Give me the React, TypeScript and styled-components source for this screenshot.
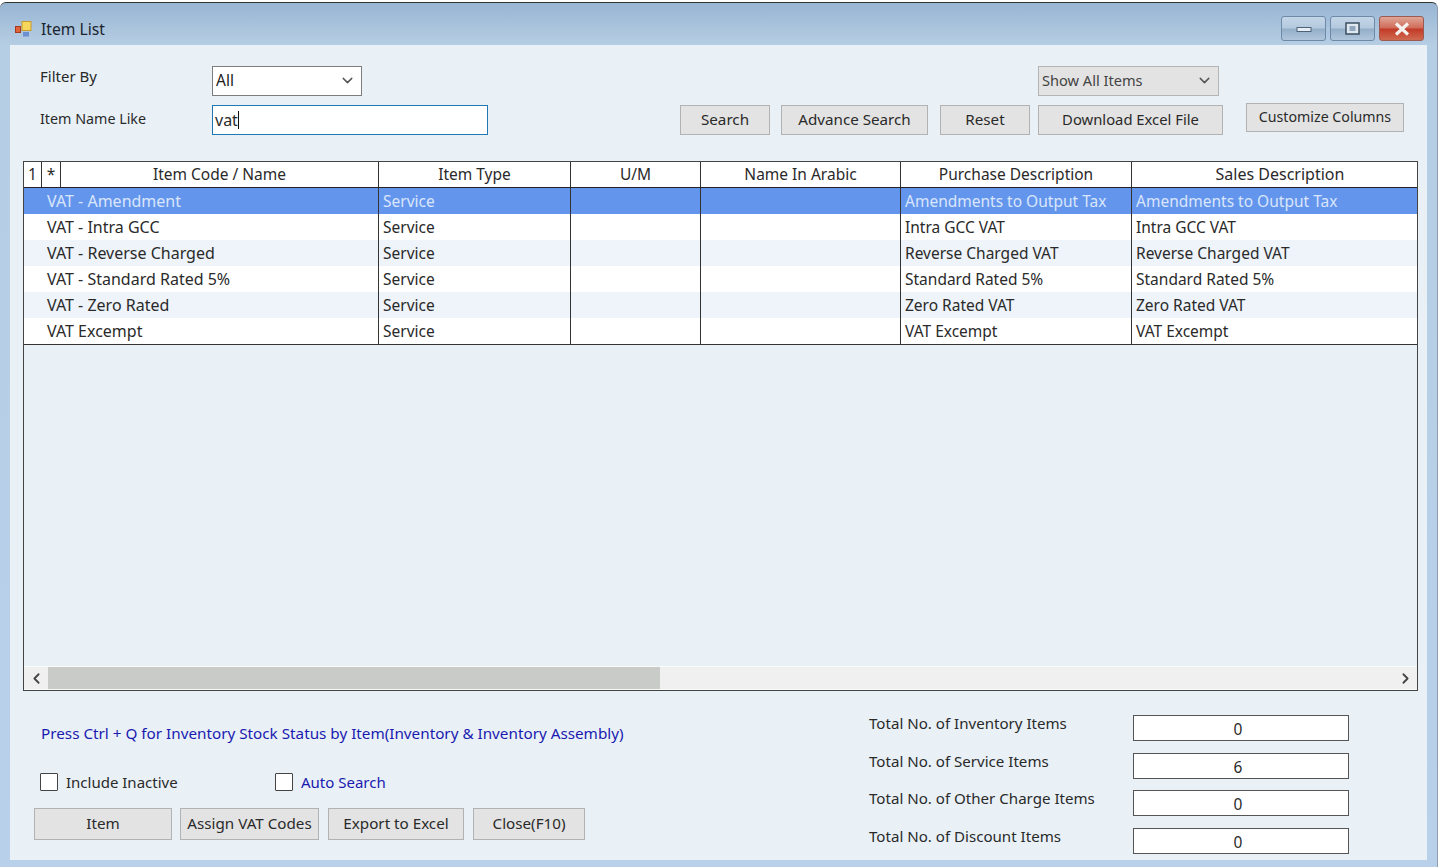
import React from 'react'
import styled, { createGlobalStyle } from 'styled-components'
import { ChevronDown, ChevronLeft, ChevronRight } from 'lucide-react'

const GlobalStyle = createGlobalStyle`
  html, body {
    margin: 0;
    padding: 0;
    background: #fff;
  }
  body {
    padding-top: 2px;
    font-family: "Noto Sans", "DejaVu Sans", sans-serif;
    font-size: 15px;
    color: #2a2a2a;
  }
`

const Window = styled.div`
  width: 1438px;
  height: 865px;
  box-sizing: border-box;
  padding: 0 10px 7px 10px;
  display: flex;
  flex-direction: column;
  border-top: 1px solid #333;
  border-right: 1px solid #8a9cae;
  border-radius: 6px 6px 0 0;
  overflow: hidden;
  background: linear-gradient(180deg, #98b5d2 0, #b6cee4 42px, #b8d0ea 100%);
`
const TitleBar = styled.div`
  height: 42px;
  flex: none;
  display: flex;
  align-items: center;
  padding: 10px 0 0 4px;
  box-sizing: border-box;
`
const TitleText = styled.span`
  margin-left: 7px;
  font-size: 15.7px;
  color: #1c2530;
`
const WindowButtons = styled.div`
  margin-left: auto;
  margin-right: 3px;
  margin-top: 3px;
  align-self: flex-start;
  display: flex;
  gap: 4px;
`
const WindowButton = styled.div<{ $close?: boolean }>`
  width: 45px;
  height: 25px;
  box-sizing: border-box;
  border: 1px solid ${(p) => (p.$close ? '#9c5a50' : '#6f8aa8')};
  border-radius: 3px;
  display: flex;
  align-items: center;
  justify-content: center;
  background: ${(p) =>
    p.$close
      ? 'linear-gradient(180deg, #e0a798 0, #d06a58 48%, #c23a28 52%, #cf6a50 100%)'
      : 'linear-gradient(180deg, #c4d6e8 0, #b4c9de 48%, #94aec8 52%, #b0c6dc 100%)'};
`
const Panel = styled.div`
  flex: 1;
  padding: 21px 0 0 13px;
  display: flex;
  flex-direction: column;
  min-height: 0;
  background: #e9f1f7;
`
const FormRow = styled.div<{ $top?: number }>`
  display: flex;
  align-items: flex-start;
  margin-top: ${(p) => p.$top ?? 0}px;
  height: 30px;
`
const FormLabel = styled.div<{ $shift: number; $size?: number }>`
  width: 172px;
  padding-left: 17px;
  margin-top: ${(p) => p.$shift}px;
  font-size: ${(p) => p.$size ?? 15}px;
  line-height: 20px;
  flex: none;
`
const Select = styled.div<{ $w: number; $grey?: boolean; $left?: number }>`
  width: ${(p) => p.$w}px;
  height: 30px;
  box-sizing: border-box;
  margin-left: ${(p) => p.$left ?? 0}px;
  padding: 0 5px 2px 3px;
  display: flex;
  align-items: center;
  justify-content: space-between;
  font-size: ${(p) => (p.$grey ? 14.6 : 15.5)}px;
  border: 1px solid ${(p) => (p.$grey ? '#b4b4b4' : '#7d7d7d')};
  background: ${(p) => (p.$grey ? '#e3e3e3' : '#fff')};
  color: ${(p) => (p.$grey ? '#444' : '#222')};
`
const SearchInput = styled.div`
  width: 276px;
  height: 30px;
  box-sizing: border-box;
  padding: 0 2px 1px;
  display: flex;
  align-items: center;
  font-size: 16px;
  background: #fff;
  border: 1.5px solid #1d78b4;
`
const Caret = styled.span`
  width: 1px;
  height: 18px;
  background: #111;
`
const FlatButton = styled.div<{ $w: number; $h?: number; $left?: number; $top?: number; $size?: number }>`
  width: ${(p) => p.$w}px;
  height: ${(p) => p.$h ?? 30}px;
  box-sizing: border-box;
  margin-left: ${(p) => p.$left ?? 0}px;
  margin-top: ${(p) => p.$top ?? 0}px;
  padding-bottom: 2px;
  flex: none;
  display: flex;
  align-items: center;
  justify-content: center;
  white-space: nowrap;
  font-size: ${(p) => p.$size ?? 15.2}px;
  color: #2a2a2a;
  background: #e3e3e3;
  border: 1px solid #b2b2b2;
`
const Grid = styled.div`
  margin-top: 26px;
  height: 530px;
  flex: none;
  box-sizing: border-box;
  width: 1395px;
  display: flex;
  flex-direction: column;
  border: 1px solid #444;
`
const GridRow = styled.div<{ $selected?: boolean; $alt?: boolean; $head?: boolean }>`
  display: grid;
  grid-template-columns: 18px 19px 318px 192px 130px 200px 231px 1fr;
  height: 26px;
  flex: none;
  box-sizing: border-box;
  background: ${(p) => (p.$selected ? '#6495ed' : p.$alt ? '#eef4f9' : '#fff')};
  color: ${(p) => (p.$selected ? '#d9e6fb' : '#2a2a2a')};
  border-bottom: ${(p) => (p.$head ? '1px solid #222' : 'none')};
`
const Cell = styled.div<{ $center?: boolean; $indent?: number; $span?: number; $size?: number; $head?: boolean }>`
  grid-column: span ${(p) => p.$span ?? 1};
  box-sizing: border-box;
  padding-left: ${(p) => p.$indent ?? 4}px;
  font-size: ${(p) => p.$size ?? 15.5}px;
  line-height: ${(p) => (p.$head ? 24 : 26)}px;
  white-space: nowrap;
  overflow: hidden;
  text-align: ${(p) => (p.$center ? 'center' : 'left')};
  border-right: 1px solid #333;
  &:last-child {
    border-right: none;
  }
`
const EmptyArea = styled.div`
  flex: 1;
  background: #e9f1f7;
  border-top: 1px solid #333;
`
const ScrollBar = styled.div`
  height: 24px;
  flex: none;
  box-sizing: border-box;
  display: flex;
  align-items: center;
  background: #f0f0f0;
  border-top: 1px solid #f8fbf8;
  border-bottom: 1px solid #f8fbf8;
`
const ScrollThumb = styled.div`
  width: 612px;
  height: 100%;
  background: #c9cbc9;
`
const ScrollEnd = styled.div`
  width: 24px;
  flex: none;
  display: flex;
  justify-content: center;
  color: #444;
`
const ScrollTrack = styled.div`
  flex: 1;
`
const Footer = styled.div`
  flex: 1;
  width: 1395px;
  display: flex;
  justify-content: space-between;
`
const FooterLeft = styled.div`
  display: flex;
  flex-direction: column;
`
const Hint = styled.div`
  margin: 31px 0 0 18px;
  height: 22px;
  line-height: 22px;
  font-size: 15.25px;
  white-space: nowrap;
  color: #1a1ab0;
`
const CheckRow = styled.div`
  display: flex;
  margin: 27px 0 0 17px;
  height: 22px;
  align-items: center;
`
const CheckItem = styled.label<{ $w?: number; $blue?: boolean }>`
  display: flex;
  align-items: center;
  gap: 8px;
  width: ${(p) => (p.$w ? `${p.$w}px` : 'auto')};
  font-size: 15px;
  color: ${(p) => (p.$blue ? '#1a1ab0' : '#2a2a2a')};
`
const CheckBox = styled.span`
  width: 18px;
  height: 18px;
  box-sizing: border-box;
  background: #fff;
  border: 1px solid #444;
  border-radius: 1px;
`
const ButtonRow = styled.div`
  display: flex;
  margin: 15px 0 0 11px;
  gap: 8px;
`
const Totals = styled.div`
  margin: 24px 69px 0 0;
  display: grid;
  grid-template-columns: 264px 216px;
  grid-auto-rows: 26px;
  row-gap: 11.6px;
`
const TotalLabel = styled.div`
  font-size: 15.1px;
  line-height: 20px;
  margin-top: -2px;
  white-space: nowrap;
`
const TotalBox = styled.div`
  box-sizing: border-box;
  padding-right: 6px;
  background: #fff;
  border: 1px solid #555;
  text-align: center;
  font-size: 15.5px;
  line-height: 26px;
`

const headers = [
  'Item Code / Name',
  'Item Type',
  'U/M',
  'Name In Arabic',
  'Purchase Description',
  'Sales Description',
]

const rows = [
  ['VAT - Amendment', 'Amendments to Output Tax'],
  ['VAT - Intra GCC', 'Intra GCC VAT'],
  ['VAT - Reverse Charged', 'Reverse Charged VAT'],
  ['VAT - Standard Rated 5%', 'Standard Rated 5%'],
  ['VAT - Zero Rated', 'Zero Rated VAT'],
  ['VAT Excempt', 'VAT Excempt'],
]

const totals = [
  ['Total No. of Inventory Items', '0'],
  ['Total No. of Service Items', '6'],
  ['Total No. of Other Charge Items', '0'],
  ['Total No. of Discount Items', '0'],
]

const AppIcon = () => (
  <svg width="20" height="18" viewBox="0 0 20 18">
    <rect x="1.5" y="6.5" width="5" height="6" fill="#e2603a" stroke="#a33a20" />
    <rect x="8" y="1.5" width="9" height="9" fill="#f7d65c" stroke="#c99a2a" />
    <rect x="9" y="12" width="6" height="4.5" fill="#6c8fd0" />
  </svg>
)

const App = () => (
  <>
    <GlobalStyle />
    <Window>
      <TitleBar>
        <AppIcon />
        <TitleText>Item List</TitleText>
        <WindowButtons>
          <WindowButton>
            <svg width="16" height="8" viewBox="0 0 16 8">
              <rect x="1" y="2.5" width="14" height="4" fill="#e6edf4" stroke="#4d6278" />
            </svg>
          </WindowButton>
          <WindowButton>
            <svg width="16" height="14" viewBox="0 0 16 14">
              <rect x="1" y="1" width="13" height="11" fill="#dfe8f0" stroke="#3d4f62" strokeWidth="1.5" />
              <rect x="4.5" y="4" width="6" height="5" fill="#8fa6bc" />
            </svg>
          </WindowButton>
          <WindowButton $close>
            <svg width="16" height="14" viewBox="0 0 16 14">
              <path d="M2 1.5 L14 12.5 M14 1.5 L2 12.5" stroke="#f4f1ee" strokeWidth="3.2" />
            </svg>
          </WindowButton>
        </WindowButtons>
      </TitleBar>
      <Panel>
        <FormRow>
          <FormLabel $shift={0}>Filter By</FormLabel>
          <Select $w={150}>
            All
            <ChevronDown size={17} color="#555" />
          </Select>
          <Select $w={181} $grey $left={676}>
            Show All Items
            <ChevronDown size={17} color="#555" />
          </Select>
        </FormRow>
        <FormRow $top={9}>
          <FormLabel $shift={4} $size={14.3}>Item Name Like</FormLabel>
          <SearchInput>
            vat
            <Caret />
          </SearchInput>
          <FlatButton $w={90} $left={192}>Search</FlatButton>
          <FlatButton $w={147} $left={11}>Advance Search</FlatButton>
          <FlatButton $w={90} $left={12}>Reset</FlatButton>
          <FlatButton $w={185} $left={8} $size={14.8}>Download Excel File</FlatButton>
          <FlatButton $w={158} $h={29} $left={23} $top={-2} $size={14.2}>Customize Columns</FlatButton>
        </FormRow>
        <Grid>
          <GridRow $head>
            <Cell $center $head $indent={0}>1</Cell>
            <Cell $center $head $indent={0}>*</Cell>
            {headers.map((h) => (
              <Cell
                key={h}
                $center
                $head
                $indent={h === 'Sales Description' ? 11 : 0}
                $size={h === 'Sales Description' ? 16 : 15.5}
              >
                {h}
              </Cell>
            ))}
          </GridRow>
          {rows.map(([name, desc], i) => (
            <GridRow key={name} $selected={i === 0} $alt={i % 2 === 0}>
              <Cell $span={3} $indent={23} $size={16}>{name}</Cell>
              <Cell>Service</Cell>
              <Cell />
              <Cell />
              <Cell>{desc}</Cell>
              <Cell>{desc}</Cell>
            </GridRow>
          ))}
          <EmptyArea />
          <ScrollBar>
            <ScrollEnd><ChevronLeft size={17} strokeWidth={2.5} /></ScrollEnd>
            <ScrollThumb />
            <ScrollTrack />
            <ScrollEnd><ChevronRight size={17} strokeWidth={2.5} /></ScrollEnd>
          </ScrollBar>
        </Grid>
        <Footer>
          <FooterLeft>
            <Hint>Press Ctrl + Q for Inventory Stock Status by Item(Inventory &amp; Inventory Assembly)</Hint>
            <CheckRow>
              <CheckItem $w={235}><CheckBox />Include Inactive</CheckItem>
              <CheckItem $blue><CheckBox />Auto Search</CheckItem>
            </CheckRow>
            <ButtonRow>
              <FlatButton $w={138} $h={32}>Item</FlatButton>
              <FlatButton $w={139} $h={32}>Assign VAT Codes</FlatButton>
              <FlatButton $w={136} $h={32} $left={1}>Export to Excel</FlatButton>
              <FlatButton $w={112} $h={32} $left={1}>Close(F10)</FlatButton>
            </ButtonRow>
          </FooterLeft>
          <Totals>
            {totals.map(([label, value]) => (
              <React.Fragment key={label}>
                <TotalLabel>{label}</TotalLabel>
                <TotalBox>{value}</TotalBox>
              </React.Fragment>
            ))}
          </Totals>
        </Footer>
      </Panel>
    </Window>
  </>
)

export default App
